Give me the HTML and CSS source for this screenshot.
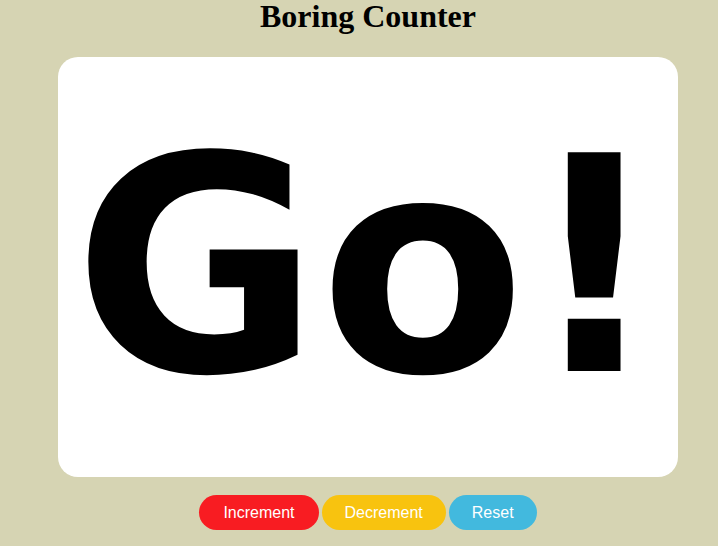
FILE: index.html
```html
<!DOCTYPE html>
<html>
<head>
<meta charset="utf-8">
<title>Boring Counter</title>
<link rel="stylesheet" href="styles.css">
</head>
<body>
<main class="app">
  <h1 class="title">Boring Counter</h1>
  <section class="card">
    <div class="display">Go!</div>
  </section>
  <div class="controls">
    <button class="btn btn-inc">Increment</button>
    <button class="btn btn-dec">Decrement</button>
    <button class="btn btn-reset">Reset</button>
  </div>
</main>
</body>
</html>
```
FILE: styles.css
```css
html, body {
  margin: 0;
  padding: 0;
  background: #d6d4b3;
}
.app {
  display: flex;
  flex-direction: column;
  align-items: center;
  padding-left: 18px;
}
.title {
  margin: 0;
  font-family: "Liberation Serif", "Times New Roman", serif;
  font-size: 32px;
  line-height: 32px;
  font-weight: bold;
  color: #000;
}
.card {
  margin-top: 25px;
  width: 620px;
  height: 420px;
  background: #ffffff;
  border-radius: 20px;
  display: flex;
  align-items: center;
  justify-content: center;
}
.display {
  font-family: "DejaVu Sans", sans-serif;
  font-weight: bold;
  font-size: 300px;
  color: #000;
}
.controls {
  margin-top: 18px;
  display: flex;
  gap: 3px;
}
.btn {
  border: none;
  border-radius: 18px;
  padding: 8px 23px;
  font-family: "Liberation Sans", Arial, sans-serif;
  font-size: 16px;
  line-height: 19px;
  color: #fff;
}
.btn-inc { background: #f81c22; padding: 8px 24px; }
.btn-dec { background: #f8c30f; }
.btn-reset { background: #42b9de; }
```
